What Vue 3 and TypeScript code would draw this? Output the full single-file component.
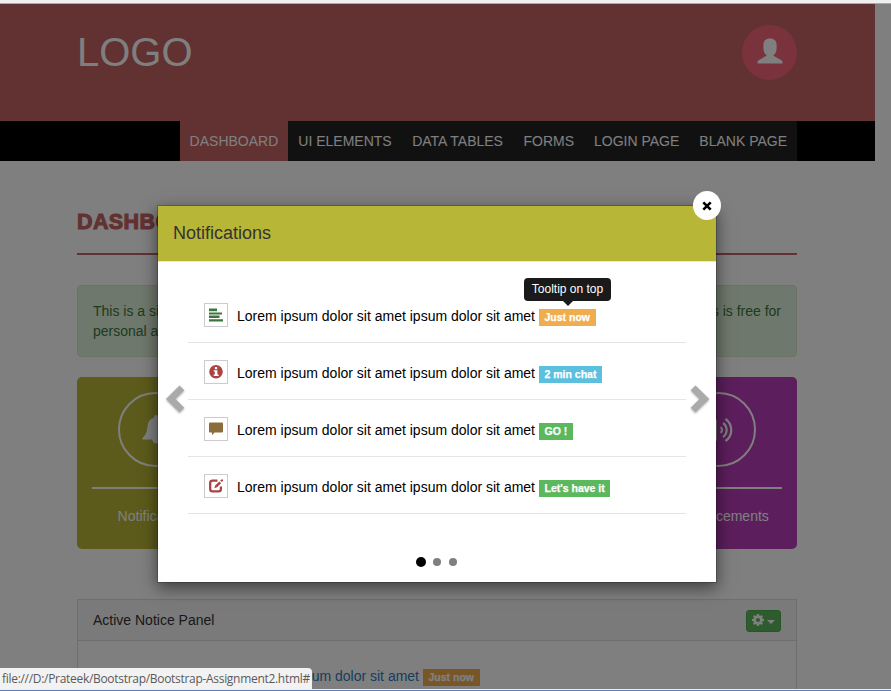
<script setup lang="ts">
interface NavItem { label: string; active?: boolean }
interface Notice { icon: 'lines' | 'info' | 'comment' | 'edit'; tone: string; badge: string; badgeTone: string; tip?: string }

const navItems: NavItem[] = [
  { label: 'DASHBOARD', active: true },
  { label: 'UI ELEMENTS' },
  { label: 'DATA TABLES' },
  { label: 'FORMS' },
  { label: 'LOGIN PAGE' },
  { label: 'BLANK PAGE' },
]

const message = 'Lorem ipsum dolor sit amet ipsum dolor sit amet'

const notices: Notice[] = [
  { icon: 'lines', tone: 'success', badge: 'Just now', badgeTone: 'warning', tip: 'Tooltip on top' },
  { icon: 'info', tone: 'danger', badge: '2 min chat', badgeTone: 'info' },
  { icon: 'comment', tone: 'brown', badge: 'GO !', badgeTone: 'green' },
  { icon: 'edit', tone: 'danger', badge: "Let's have it", badgeTone: 'green' },
]
</script>

<template>
  <div class="screen">
    <div class="page">
      <header class="header">
        <div class="container header-inner">
          <div class="logo">LOGO</div>
          <div class="avatar">
            <svg width="26" height="26" viewBox="0 0 26 26"><path d="M13 .5c4.200 0 6.600 2.300 6.600 6.500v3.500c0 3-1.300 5.300-3 6.600v.7l7.700 4.400c.9.500 1.200 1 1.200 1.800v1.500H.5V24c0-.8.3-1.300 1.200-1.800l7.700-4.400v-.7c-1.700-1.300-3-3.600-3-6.600V7c0-4.200 2.400-6.500 6.600-6.500z" /></svg>
          </div>
        </div>
      </header>
      <nav class="nav">
        <div class="container nav-inner">
          <a v-for="item in navItems" :key="item.label" class="nav-link" :class="{ active: item.active }">{{ item.label }}</a>
        </div>
      </nav>
      <main class="container main">
        <h1 class="title">DASHBOARD</h1>
        <div class="alert">
          <div class="alert-line"><span>This is a simple admin</span><span>This is free for</span></div>
          <div>personal and commercial use</div>
        </div>
        <div class="cards">
          <section class="card olive">
            <div class="ring">
              <svg width="28" height="31" viewBox="0 0 30 31"><path d="M15 0c1.300 0 2 .8 2 2v.8c4.200 1 6.500 4.300 7 8.700.7 7 2 10 5.500 13.200.7.700.4 1.600-.6 1.600H19c0 2.500-1.600 4.200-4 4.200s-4-1.700-4-4.200H1.100c-1 0-1.300-.9-.6-1.600C4 21.500 5.300 18.500 6 11.500c.5-4.400 2.800-7.700 7-8.700V2c0-1.200.7-2 2-2z" /></svg>
            </div>
            <div class="card-label">Notifications</div>
          </section>
          <section class="card purple">
            <div class="ring">
              <svg width="30" height="26" viewBox="0 0 30 26">
                <path d="M0 8h5l9-6v22l-9-6H0z" />
                <path class="wave" d="M17.500 10.200a3.400 3.400 0 0 1 0 5.700M20 6a8.600 8.600 0 0 1 0 14M22.500 2a13.400 13.400 0 0 1 0 22" />
              </svg>
            </div>
            <div class="card-label">Announcements</div>
          </section>
        </div>
        <section class="panel">
          <div class="panel-head">
            <span>Active Notice Panel</span>
            <button class="gear-button" type="button">
              <svg width="12" height="12" viewBox="0 0 12 12"><path fill-rule="evenodd" d="M5 0h2l.3 1.600 1 .4L9.700 1.100l1.300 1.300L10.100 3.700l.4 1L12 5v2l-1.600.3-.4 1 .9 1.400-1.300 1.300-1.300-.9-1 .4L7 12H5l-.3-1.600-1-.4-1.400.9L1 9.600l.9-1.300-.4-1L0 7V5l1.600-.3.4-1L1.100 2.300 2.400 1l1.300.9 1-.4zM6 3.900a2.100 2.100 0 1 0 0 4.200 2.100 2.100 0 0 0 0-4.200z" /></svg>
              <span class="caret"></span>
            </button>
          </div>
          <div class="panel-row"><a>{{ message }}</a><span class="badge warning">Just now</span></div>
        </section>
      </main>
    </div>

    <div class="backdrop">
      <div class="modal">
        <button class="close" type="button" aria-label="Close">
          <svg width="10" height="10" viewBox="0 0 10 10"><path d="M1.300 1.300l7.400 7.400M8.700 1.300l-7.400 7.400" /></svg>
        </button>
        <div class="modal-head">Notifications</div>
        <div class="modal-body">
          <svg class="arrow" width="20" height="29" viewBox="0 0 20 29"><path d="M14.500 0.500l4.800 4.800-8.800 8.700 8.800 8.700-4.800 4.800L1 14z" /></svg>
          <ul class="list">
            <li v-for="notice in notices" :key="notice.badge" class="item">
              <span class="icon-box" :class="notice.tone">
                <svg width="14" height="14" viewBox="0 0 14 14">
                  <path v-if="notice.icon === 'lines'" d="M0 .5h8v2.800H0zM0 4.500h13v2H0zM0 7.500h10.500v2.500H0zM0 11.300h14v2.200H0z" />
                  <path v-else-if="notice.icon === 'info'" fill-rule="evenodd" d="M7 0a6.800 6.800 0 1 1 0 13.600A6.800 6.800 0 0 1 7 0zM5.800 2v2.200h2.400V2zM4.700 5.300v1.200h1.100v3H4.700v1.400h4.900V9.500H8.400V5.300z" />
                  <path v-else-if="notice.icon === 'comment'" d="M1 .5h12q1 0 1 1v8q0 1-1 1H5.500L3 13.300v-2.800H1q-1 0-1-1v-8q0-1 1-1z" />
                  <g v-else>
                    <path class="stroke" d="M8.500 1.700H3.500Q1.200 1.700 1.200 4v6Q1.200 12.400 3.500 12.400h6q2.400 0 2.400-2.400V7.500" />
                    <path d="M5.300 9.300L6.200 6.500 10.300 2.400 12.100 4.200 8 8.300zM11.200 1.600L12.400.4 14 .4 14 1.800 12.900 3.100z" />
                  </g>
                </svg>
              </span>
              <span class="message">{{ message }}</span>
              <span class="badge" :class="notice.badgeTone">{{ notice.badge }}<span v-if="notice.tip" class="tooltip">{{ notice.tip }}</span></span>
            </li>
          </ul>
          <svg class="arrow" width="20" height="29" viewBox="0 0 20 29"><path d="M5.500 0.500L.7 5.300l8.800 8.700-8.800 8.700 4.800 4.800L19.300 14z" /></svg>
        </div>
        <div class="dots"><span class="dot current"></span><span class="dot"></span><span class="dot"></span></div>
      </div>
    </div>

    <div class="top-edge"></div>
    <div class="bottom-edge"></div>
    <div class="status">file:///D:/Prateek/Bootstrap/Bootstrap-Assignment2.html#</div>
  </div>
</template>

<style>
body { margin: 0; overflow: hidden; }
</style>

<style scoped>
* { box-sizing: border-box; }
.screen { position: relative; width: 891px; height: 691px; overflow: hidden; background: #fff; font: 14px/20px "Liberation Sans", Arial, sans-serif; color: #333; }
svg { display: block; fill: currentColor; flex: none; }
.page { padding: 4px 16px 0 0; height: 691px; overflow: hidden; }
.container { width: 720px; margin-left: 77px; }
.header { height: 117px; background: #c46262; }
.header-inner { display: flex; justify-content: space-between; padding-top: 21px; }
.logo { color: #fff; font-size: 40px; line-height: 55px; }
.avatar { width: 55px; height: 55px; border-radius: 50%; background: #f4667a; color: #fff; display: flex; align-items: center; justify-content: center; padding-bottom: 3px; }
.nav { height: 40px; background: #000; }
.nav-inner { display: flex; justify-content: flex-end; }
.nav-link { padding: 10px; line-height: 20px; color: #fff; background: #222; white-space: nowrap; }
.nav-link:nth-child(2), .nav-link:nth-child(3) { padding-right: 10.5px; }
.nav-link.active { background: #c46262; padding-left: 9.5px; }
.title { margin: 49px 0 30px; padding-bottom: 18px; height: 45px; border-bottom: 2px solid #c46262; color: #c46262; font-size: 21.500px; line-height: 25px; font-weight: 900; letter-spacing: 0.4px; -webkit-text-stroke: 1px #c46262; }
.alert { height: 72px; padding: 15px; border: 1px solid #d6e9c6; border-radius: 4px; background: #dff0d8; color: #3c763d; margin-bottom: 20px; }
.alert-line { display: flex; justify-content: space-between; }
.cards { display: flex; justify-content: space-between; margin-bottom: 50px; }
.card { width: 157.5px; height: 172px; border-radius: 5px; padding: 15px; color: #fff; }
.olive { background: #b8b637; }
.purple { background: #b83cb8; }
.ring { width: 75px; height: 75px; margin: 0 auto; border: 2px solid #fff; border-radius: 50%; display: flex; align-items: center; justify-content: center; }
.wave { fill: none; stroke: currentColor; stroke-width: 2.200; }
.card-label { margin-top: 20px; border-top: 2px solid #fff; padding-top: 17px; text-align: center; }
.panel { border: 1px solid #ddd; height: 120px; }
.panel-head { display: flex; align-items: center; justify-content: space-between; height: 41px; padding: 0 15px; border-bottom: 1px solid #ddd; background: #f5f5f5; }
.gear-button { display: flex; align-items: center; width: 35px; height: 22px; border: 1px solid #4cae4c; border-radius: 3px; background: #5cb85c; color: #fff; padding: 0 5px 2px; gap: 3px; margin-top: 2px; }
.caret { border: 4px solid transparent; border-top-color: #fff; border-bottom: 0; margin-top: 3px; }
.panel-row { display: flex; padding: 25px 0 0 43px; color: #337ab7; }
.panel-row a { width: 302px; white-space: nowrap; }

.backdrop { position: absolute; inset: 0; background: rgba(0, 0, 0, 0.5); padding: 205px 0 0 157px; }
.modal { position: relative; width: 560px; height: 378px; border: 1px solid rgba(0, 0, 0, 0.2); background: #fff; background-clip: padding-box; box-shadow: 0 5px 15px rgba(0, 0, 0, 0.5); color: #000; }
.modal-head { height: 56px; padding: 15px; border-bottom: 1px solid #e5e5e5; background: #b8b637; color: #333; font-size: 18px; line-height: 25px; }
.close { position: absolute; top: -15px; right: -5px; width: 28px; height: 29px; border: 0; padding: 0; border-radius: 50%; background: #fff; color: #000; display: flex; align-items: center; justify-content: center; }
.close path { stroke: currentColor; stroke-width: 2.600; fill: none; }
.modal-body { display: flex; align-items: center; justify-content: space-between; padding: 24px 6px 0 7px; }
.arrow { color: #aaa; filter: drop-shadow(0 1px 1px rgba(0, 0, 0, 0.3)); margin-bottom: 1px; }
.arrow:first-child { margin-right: 3px; }
.list { list-style: none; margin: 0 auto 0 0; padding: 0; width: 498px; }
.item { display: flex; align-items: center; height: 57px; padding: 2px 0 0 16px; border-bottom: 1px solid #e5e5e5; }
.icon-box { width: 24px; height: 24px; border: 1px solid #ccc; display: flex; align-items: center; justify-content: center; margin: 0 9px 1px 0; }
.success { color: #3c763d; }
.danger { color: #a94442; }
.brown { color: #8a6d3b; }
.stroke { fill: none; stroke: currentColor; stroke-width: 2.300; }
.message { width: 302px; white-space: nowrap; margin-top: 1px; }
.badge { position: relative; height: 17px; margin-top: 5px; padding: 0 5.5px; color: #fff; font-size: 10.500px; font-weight: 700; line-height: 17px; white-space: nowrap; -webkit-text-stroke: 0.25px #fff; }
.panel-row .badge { margin-top: 3px; }
.warning { background: #f0ad4e; }
.info { background: #5bc0de; }
.green { background: #5cb85c; }
.tooltip { position: absolute; left: -15px; bottom: 25px; width: 87px; height: 23px; border-radius: 4px; background: #1a1a1a; font-size: 12px; font-weight: 400; line-height: 22px; text-align: center; -webkit-text-stroke: 0; }
.tooltip::after { content: ""; position: absolute; top: 23px; left: 39px; border: 5px solid transparent; border-top-color: #1a1a1a; border-bottom: 0; }
.dots { display: flex; justify-content: center; align-items: center; gap: 8px; margin-top: 42px; height: 12px; }
.dot { width: 8px; height: 8px; border-radius: 50%; background: #808080; }
.dot.current { width: 10px; height: 10px; background: #000; margin-right: -1px; margin-left: -1px; }

.top-edge { position: absolute; inset: 0 0 auto; height: 4px; background: #f0f0f0; border-bottom: 1px solid #aaa; }
.bottom-edge { position: absolute; inset: auto 0 0; height: 2px; background: #5c7fb5; border-top: 1px solid #eee; }
.status { position: absolute; left: 0; bottom: 2px; width: 312px; height: 21px; border-radius: 0 4px 0 0; background: #f2f2f2; color: #5a5a5a; padding-left: 2px; font: 12px/22px "Open Sans", sans-serif; letter-spacing: -0.3px; white-space: nowrap; overflow: hidden; }
</style>
